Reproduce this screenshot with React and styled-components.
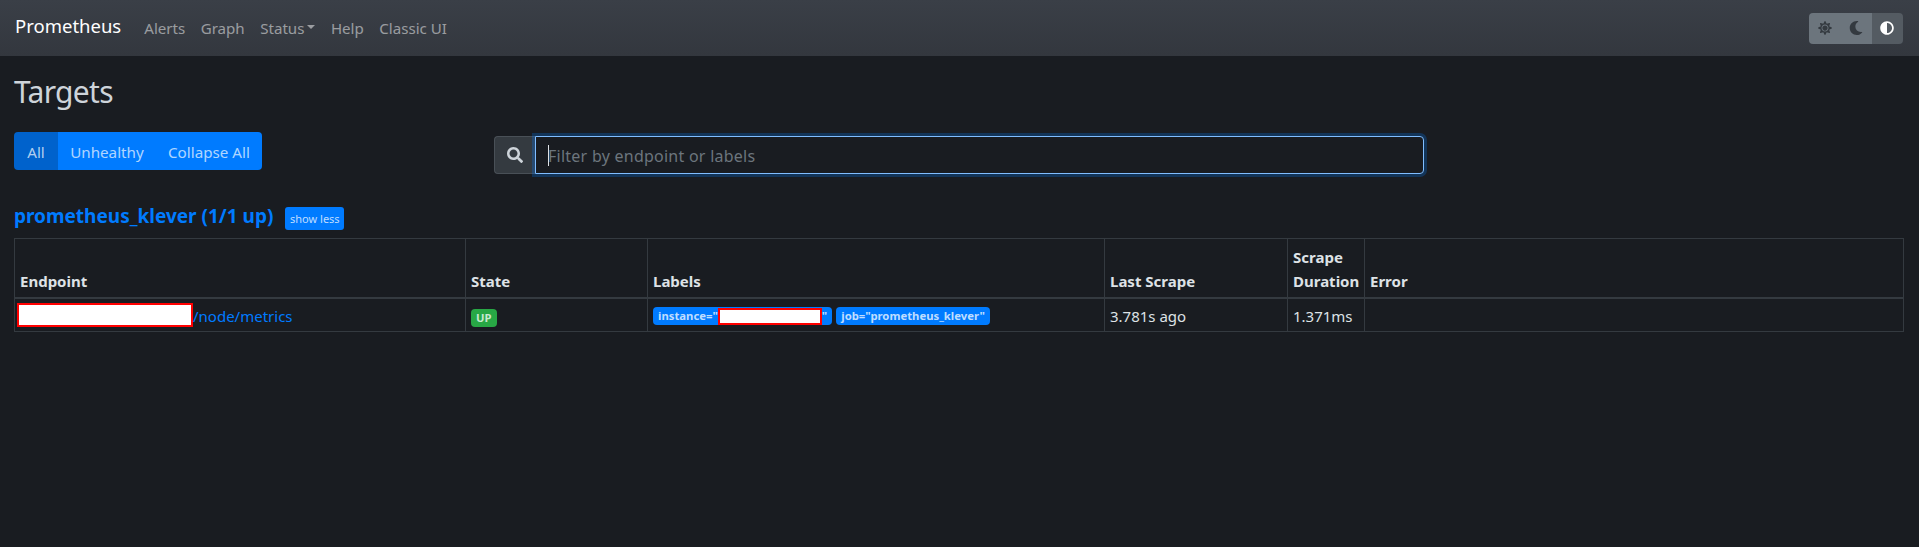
import styled, { createGlobalStyle } from "styled-components";
import { FaSun, FaMoon, FaAdjust, FaSearch } from "react-icons/fa";

const Global = createGlobalStyle`
  * {
    box-sizing: border-box;
  }
  body {
    margin: 0;
    background-color: #191c21;
    color: #dee2e6;
    font-family: "Noto Sans", "Open Sans", sans-serif;
    font-size: 16px;
    line-height: 1.5;
  }
`;

const Navbar = styled.nav`
  height: 56px;
  padding: 0 16px 0 15px;
  display: flex;
  align-items: center;
  background: linear-gradient(#3a3f47, #33373e);
`;

const Brand = styled.a`
  font-size: 18.5px;
  color: #fff;
  margin-right: 23px;
  position: relative;
  top: -2px;
`;

const NavLinks = styled.div`
  display: flex;
  gap: 15.5px;
  flex: 1;
  padding-top: 1px;
`;

const NavLink = styled.a`
  font-size: 15.1px;
  color: rgba(255, 255, 255, 0.5);
  display: flex;
  align-items: center;
`;

// triangulo do dropdown
const Caret = styled.span`
  width: 0;
  height: 0;
  margin-left: 3px;
  border-top: 4px solid rgba(255, 255, 255, 0.5);
  border-left: 4px solid transparent;
  border-right: 4px solid transparent;
  margin-bottom: 3px;
`;

const ThemeToggle = styled.div`
  display: flex;
  border-radius: 4px;
  overflow: hidden;
`;

const ThemeButton = styled.button`
  width: 31.33px;
  height: 31px;
  padding: 0;
  border: none;
  display: flex;
  align-items: center;
  justify-content: center;
  font-size: 14px;
  background-color: ${(p) => (p.$active ? "#545b62" : "#6c757d")};
  color: ${(p) => (p.$active ? "#fff" : "#343a40")};
`;

const Main = styled.main`
  padding: 16px 14px 0;
`;

const Title = styled.h2`
  margin: 0 0 21px;
  font-size: 30px;
  font-weight: 400;
  line-height: 39px;
  letter-spacing: -0.7px;
  color: #ced4da;
`;

const Toolbar = styled.div`
  display: flex;
  align-items: flex-start;
`;

const FilterGroup = styled.div`
  display: flex;
  width: 248px;
  height: 38px;
  border-radius: 4px;
  overflow: hidden;
  margin-right: 232px;
  flex-shrink: 0;
`;

const FilterButton = styled.button`
  border: none;
  padding: 1px ${(p) => (p.$active ? "12px" : "11px")} 0;
  font-family: inherit;
  font-size: 15.2px;
  color: rgba(255, 255, 255, 0.7);
  background-color: ${(p) => (p.$active ? "#0062cc" : "#007bff")};
  flex: ${(p) => (p.$active ? "0 0 44px" : "1 1 auto")};
`;

const SearchGroup = styled.div`
  display: flex;
  width: 930px;
  height: 38px;
  margin-top: 4px;
  position: relative;
`;

const SearchIcon = styled.div`
  width: 41px;
  display: flex;
  align-items: center;
  justify-content: center;
  background-color: #343a40;
  border: 1px solid #495057;
  border-right: none;
  border-radius: 4px 0 0 4px;
  color: #ced4da;
  font-size: 16px;
`;

const SearchInput = styled.input`
  flex: 1;
  min-width: 0;
  padding: 1px 12px 0;
  font-family: inherit;
  font-size: 16px;
  letter-spacing: 0.25px;
  color: #dee2e6;
  background-color: #191c21;
  border: 1px solid #80bdff;
  border-radius: 0 4px 4px 0;
  box-shadow: 0 0 0 3px rgba(0, 123, 255, 0.25);
  outline: none;
  caret-color: transparent;
  &::placeholder {
    color: #6c757d;
  }
`;

// cursor de texto parado em cima do input
const TextCursor = styled.span`
  position: absolute;
  left: 54px;
  top: 9px;
  width: 1px;
  height: 21px;
  background-color: #dee2e6;
`;

const PoolHeader = styled.div`
  display: flex;
  align-items: center;
  gap: 12px;
  margin-top: 33px;
  height: 23px;
  margin-bottom: 8px;
`;

const PoolTitle = styled.a`
  color: #007bff;
  font-size: 19px;
  font-weight: 700;
  position: relative;
  top: -2px;
`;

const ShowLess = styled.button`
  width: 59px;
  height: 23px;
  padding: 0;
  border: none;
  border-radius: 3px;
  background-color: #007bff;
  color: rgba(255, 255, 255, 0.75);
  font-family: inherit;
  font-size: 11px;
`;

const Table = styled.table`
  width: 1889px;
  table-layout: fixed;
  border-collapse: collapse;
  font-size: 15px;
`;

const Th = styled.th`
  border: 1px solid #343a40;
  border-bottom-width: 2px;
  padding: 6px 4px 4px 5px;
  text-align: left;
  vertical-align: bottom;
  line-height: 24px;
  font-weight: 700;
  color: #dee2e6;
`;

const Td = styled.td`
  border: 1px solid #343a40;
  padding: 5px 4px 3px 5px;
  height: 33px;
  line-height: 24px;
  vertical-align: middle;
`;

const EndpointLink = styled.a`
  color: #007bff;
  display: flex;
  align-items: center;
`;

// tarjas que escondem os enderecos
const Redacted = styled.span`
  display: inline-block;
  width: ${(p) => p.$w}px;
  height: ${(p) => p.$h}px;
  margin-left: ${(p) => p.$ml || 0}px;
  margin-top: ${(p) => p.$mt || 0}px;
  background-color: #fff;
  border: 2px solid #f00;
  flex-shrink: 0;
`;

const Badges = styled.div`
  display: flex;
  gap: 4px;
`;

const Badge = styled.span`
  display: inline-flex;
  align-items: center;
  height: 18px;
  padding: 0 5px;
  border-radius: 4px;
  background-color: ${(p) => p.$bg || "#007bff"};
  color: rgba(255, 255, 255, 0.75);
  font-size: 11.3px;
  font-weight: 700;
  line-height: 18px;
  white-space: nowrap;
`;

const columns = [451, 182, 457, 183, 77, 539];

export default function App() {
  return (
    <>
      <Global />
      <Navbar>
        <Brand>Prometheus</Brand>
        <NavLinks>
          <NavLink>Alerts</NavLink>
          <NavLink>Graph</NavLink>
          <NavLink>
            Status
            <Caret />
          </NavLink>
          <NavLink>Help</NavLink>
          <NavLink>Classic UI</NavLink>
        </NavLinks>
        <ThemeToggle>
          <ThemeButton>
            <FaSun />
          </ThemeButton>
          <ThemeButton>
            <FaMoon />
          </ThemeButton>
          <ThemeButton $active>
            <FaAdjust />
          </ThemeButton>
        </ThemeToggle>
      </Navbar>
      <Main>
        <Title>Targets</Title>
        <Toolbar>
          <FilterGroup>
            <FilterButton $active>All</FilterButton>
            <FilterButton>Unhealthy</FilterButton>
            <FilterButton>Collapse All</FilterButton>
          </FilterGroup>
          <SearchGroup>
            <SearchIcon>
              <FaSearch />
            </SearchIcon>
            <SearchInput placeholder="Filter by endpoint or labels" />
            <TextCursor />
          </SearchGroup>
        </Toolbar>
        <PoolHeader>
          <PoolTitle>prometheus_klever (1/1 up)</PoolTitle>
          <ShowLess>show less</ShowLess>
        </PoolHeader>
        <Table>
          <colgroup>
            {columns.map((w, i) => (
              <col key={i} style={{ width: w }} />
            ))}
          </colgroup>
          <thead>
            <tr>
              <Th>Endpoint</Th>
              <Th>State</Th>
              <Th>Labels</Th>
              <Th>Last Scrape</Th>
              <Th>Scrape Duration</Th>
              <Th>Error</Th>
            </tr>
          </thead>
          <tbody>
            <tr>
              <Td>
                <EndpointLink>
                  <Redacted $w={176} $h={24} $ml={-3} $mt={-2} />
                  /node/metrics
                </EndpointLink>
              </Td>
              <Td>
                <Badge $bg="#28a745">UP</Badge>
              </Td>
              <Td>
                <Badges>
                  <Badge>
                    instance="
                    <Redacted $w={104} $h={17} />"
                  </Badge>
                  <Badge>job="prometheus_klever"</Badge>
                </Badges>
              </Td>
              <Td>3.781s ago</Td>
              <Td>1.371ms</Td>
              <Td></Td>
            </tr>
          </tbody>
        </Table>
      </Main>
    </>
  );
}
